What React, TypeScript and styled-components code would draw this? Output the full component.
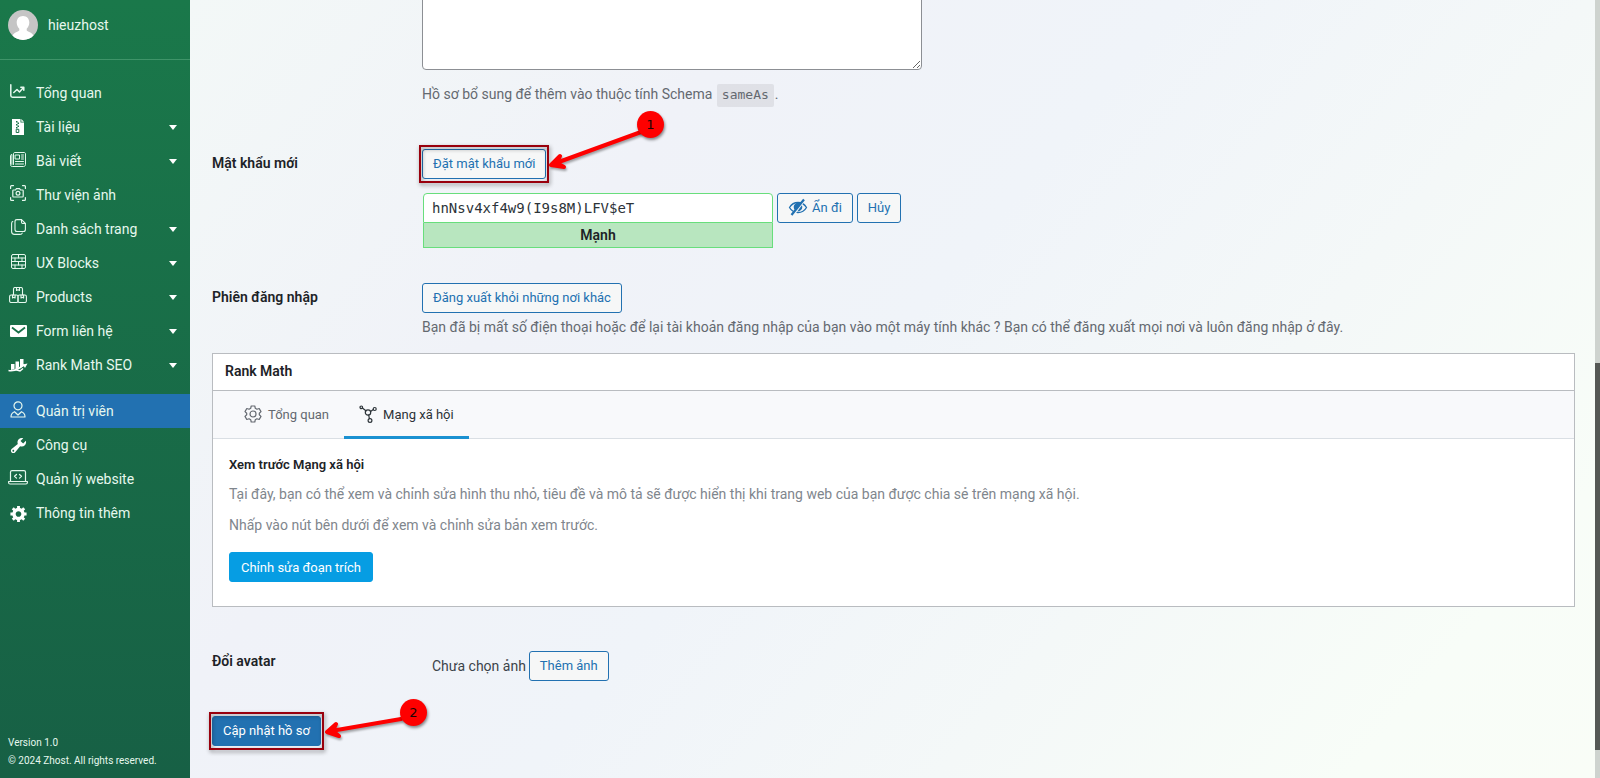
import React from 'react';
import styled, { createGlobalStyle, css } from 'styled-components';

const GlobalStyle = createGlobalStyle`
  *, *::before, *::after { box-sizing: border-box; }
  body {
    margin: 0;
    font: 14px/20px Roboto, "Liberation Sans", sans-serif;
    color: #3c434a;
    overflow-x: hidden;
  }
  button, input, textarea { font-family: inherit; margin: 0; }
  h2, h3, p, ul { margin: 0; padding: 0; }
  ul { list-style: none; }
`;

const Page = styled.div`
  display: flex;
  min-height: 100vh;
`;

/* ---------- sidebar ---------- */

const Sidebar = styled.nav`
  display: flex;
  flex-direction: column;
  flex: none;
  width: 190px;
  color: #e6f8ee;
  background: linear-gradient(180deg, #1a784a 0%, #176045 100%);
`;

const UserBar = styled.a`
  display: flex;
  align-items: center;
  gap: 10px;
  height: 60px;
  padding: 0 8px 10px;
  border-bottom: 1px solid #3f9469;
  color: inherit;
  text-decoration: none;
`;

const MenuList = styled.ul`
  padding-top: 16px;
`;

const MenuItem = styled.li<{ $separated?: boolean }>`
  margin-top: ${(p) => (p.$separated ? '12px' : '0')};
`;

const MenuLink = styled.a<{ $active?: boolean }>`
  display: flex;
  align-items: center;
  height: 34px;
  padding: 0 13px 0 8px;
  color: inherit;
  background: ${(p) => (p.$active ? '#2271b1' : 'transparent')};
  text-decoration: none;
`;

const MenuIcon = styled.span<{ $raised?: boolean }>`
  display: flex;
  justify-content: center;
  width: 20px;
  margin-right: 8px;
  padding-bottom: ${(p) => (p.$raised ? '4px' : '0')};
`;

const MenuText = styled.span`
  flex: 1;
`;

const Caret = styled.span`
  border: 4px solid transparent;
  border-top: 5px solid #fff;
  border-bottom: 0;
`;

const Version = styled.footer`
  margin-top: auto;
  padding: 0 8px 8px;
  font-size: 10px;
  line-height: 18px;
`;

/* ---------- content ---------- */

const Content = styled.main`
  flex: 1;
  min-width: 0;
  padding: 0 20px 28px 22px;
  background: linear-gradient(130deg, #f3f8f7 0%, #f0f2f8 28%, #f0f4f9 48%, #f4f8f8 68%, #f8fdf8 88%, #f9fdf7 100%);
`;

const Field = styled.section<{ $top?: number }>`
  display: grid;
  grid-template-columns: 210px 1fr;
  padding-top: ${(p) => p.$top ?? 0}px;
`;

const Label = styled.label<{ $flush?: boolean }>`
  padding-top: ${(p) => (p.$flush ? '0' : '4px')};
  font-weight: 600;
  color: #1d2327;
`;

const ProfileLinks = styled.textarea`
  display: block;
  width: 500px;
  max-width: 100%;
  height: 76px;
  margin-top: -6px;
  border: 1px solid #8c8f94;
  border-radius: 4px;
  background: #fff;
`;

const Description = styled.p<{ $top: number }>`
  margin-top: ${(p) => p.$top}px;
  color: #646970;
`;

const Code = styled.code`
  display: inline-block;
  padding: 1px 5px 2px;
  margin: 0 1px;
  border-radius: 2px;
  background: rgba(0, 0, 0, 0.07);
  font: 13px/20px "DejaVu Sans Mono", monospace;
`;

const Button = styled.button<{ $kind?: 'primary' | 'accent' }>`
  display: inline-flex;
  align-items: center;
  gap: 4px;
  height: 30px;
  padding: 0 10px 2px;
  border: 1px solid #2271b1;
  border-radius: 3px;
  color: #2271b1;
  background: #f6f7f7;
  font-size: 13px;
  white-space: nowrap;
  vertical-align: top;
  ${(p) => p.$kind === 'primary' && css`color: #fff; background: #2271b1;`}
  ${(p) => p.$kind === 'accent' && css`
    padding: 0 11px;
    border-color: #069de3;
    color: #fff;
    background: #069de3;
  `}
`;

const PasswordRow = styled.div`
  display: flex;
  align-items: flex-start;
  gap: 4px;
  margin-top: 14px;
`;

const PasswordBox = styled.div`
  width: 350px;
  margin-left: 1px;
`;

const PasswordInput = styled.input`
  display: block;
  width: 100%;
  height: 30px;
  padding: 0 8px;
  border: 1px solid #68de7c;
  border-radius: 4px 4px 0 0;
  background: #fff;
  color: #2c3338;
  && { font: 14px/28px "DejaVu Sans Mono", monospace; }
`;

const Strength = styled.output`
  display: block;
  height: 25px;
  border: 1px solid #68de7c;
  border-top: 0;
  background: #b8e6bf;
  color: #1d2327;
  font-weight: 600;
  line-height: 24px;
  text-align: center;
`;

/* ---------- panel ---------- */

const Panel = styled.section`
  margin-top: 16px;
  border: 1px solid #b9bcc0;
  background: #fff;
`;

const PanelTitle = styled.h2`
  height: 37px;
  padding-left: 12px;
  border-bottom: 1px solid #b9bcc0;
  color: #1d2327;
  font-size: 14px;
  font-weight: 600;
  line-height: 34px;
`;

const Tabs = styled.div`
  display: flex;
  height: 48px;
  padding-left: 16px;
  border-bottom: 1px solid #dadfe4;
  background: #f8f9fb;
`;

const Tab = styled.button<{ $active?: boolean }>`
  display: flex;
  align-items: center;
  gap: 6px;
  height: 48px;
  padding: 1px 15px 0;
  border: 0;
  border-bottom: 3px solid ${(p) => (p.$active ? '#1b91d1' : 'transparent')};
  background: none;
  color: ${(p) => (p.$active ? '#2c3338' : '#646970')};
  font-size: 13px;
`;

const PanelBody = styled.div`
  padding: 16px 16px 24px;
`;

const PanelHeading = styled.h3`
  color: #1d2327;
  font-size: 13px;
  font-weight: 600;
`;

const PanelText = styled.p`
  margin: 9px 0 11px;
  color: #7f868d;
`;

const PanelActions = styled.div`
  margin-top: 17px;
`;

const AvatarRow = styled.div`
  display: flex;
  align-items: center;
  gap: 3px;
  padding-left: 10px;
`;

const SubmitRow = styled.div`
  padding-top: 35px;
`;

/* ---------- call-outs drawn over the page ---------- */

const Marked = styled.span`
  position: relative;
  display: inline-block;
  vertical-align: top;
`;

const Frame = styled.span`
  position: absolute;
  inset: -4px -3px;
  border: 2px solid #99000d;
  filter: drop-shadow(1px 2px 2px rgba(0, 0, 0, 0.45));
  pointer-events: none;
`;

const ArrowSvg = styled.svg`
  position: absolute;
  left: 100%;
  top: 0;
  overflow: visible;
  filter: drop-shadow(1px 2px 1px rgba(0, 0, 0, 0.35));
  pointer-events: none;
`;

const Step = styled.span<{ $left: number; $top: number }>`
  position: absolute;
  left: ${(p) => p.$left}px;
  top: ${(p) => p.$top}px;
  width: 27px;
  height: 27px;
  border-radius: 50%;
  background: #fe0000;
  color: #1b0505;
  font: 13px/27px "DejaVu Sans", sans-serif;
  text-align: center;
  box-shadow: 1px 2px 3px rgba(0, 0, 0, 0.45);
`;

const ScrollTrack = styled.div`
  flex: none;
  width: 5px;
  padding-top: 46.7vh;
  background: #ced3cf;
`;

const ScrollThumb = styled.div`
  height: 49.7vh;
  background: #555855;
`;

/* ---------- drawings ---------- */

const Arrow = ({ shaft, head }: { shaft: string; head: string }) => (
  <ArrowSvg width="100" height="30" fill="none" stroke="#fe0000" strokeWidth="4" strokeLinecap="round" strokeLinejoin="round" aria-hidden="true">
    <path d={shaft} />
    <path d={head} fill="#fe0000" />
  </ArrowSvg>
);

const Avatar = () => (
  <svg width="30" height="30" viewBox="0 0 30 30" aria-hidden="true">
    <clipPath id="round"><circle cx="15" cy="15" r="15" /></clipPath>
    <g clipPath="url(#round)">
      <rect width="30" height="30" fill="#c5c5c5" />
      <path fill="#fff" d="M15 6c3.800 0 6.300 2.800 6.300 6.600 0 2.600-1.100 4.700-2.600 6.200v1.600c1.200 1.600 6.300 1.800 7.300 6.600v4H4v-4c1-4.800 6.100-5 7.300-6.600v-1.600c-1.500-1.500-2.600-3.600-2.600-6.200C8.700 8.800 11.200 6 15 6z" />
    </g>
  </svg>
);

const line = { fill: 'none', stroke: 'currentColor', strokeLinecap: 'round', strokeLinejoin: 'round' } as const;

const ChartIcon = () => (
  <svg width="16" height="14" viewBox="0 0 16 14" {...line} strokeWidth="1.500">
    <path d="M.8.8v10.700c0 1 .6 1.700 1.700 1.700h12.800" />
    <path d="M3.800 8.500L7 5.500l2.500 2.500 4-4.500M10.800 3.200h3v3" />
  </svg>
);

const ZipIcon = () => (
  <svg width="12" height="16" viewBox="0 0 12 16">
    <path d="M0 0h8.500v3.500H12V16H0z" fill="#fff" />
    <path d="M9.300 0L12 2.700H9.300z" fill="#fff" />
    <path d="M4 2h1.500v1.500H4zM5.500 3.500H7V5H5.500zM4 5h1.500v1.500H4zM5.500 6.500H7V8H5.500zM4 8h1.500v1.500H4z" fill="#197049" />
    <path d="M4.200 10.300h2.600v3.200H4.200z" fill="none" stroke="#197049" />
  </svg>
);

const NewsIcon = () => (
  <svg width="16" height="15" viewBox="0 0 16 15" {...line}>
    <path d="M3.500 12.500V2c0-1 .5-1.500 1.500-1.500h9c1 0 1.500.5 1.500 1.500v10.500c0 1.200-.8 2-2 2H2.300c-1.200 0-1.800-.8-1.800-2V3.700c0-.8.600-1.200 1.400-1.200v10" />
    <path d="M5.500 3h4v4h-4zM11.500 3h2M11.500 5h2M11.500 7h2M5.500 9.500h8M5.500 12h8" />
  </svg>
);

const PhotoIcon = () => (
  <svg width="16" height="16" viewBox="0 0 16 16" {...line} strokeWidth="1.200">
    <path d="M.6 3.500v-2c0-.6.300-.9.900-.9h2M12.500.6h2c.6 0 .9.300.9.900v2M15.400 12.500v2c0 .6-.3.9-.9.9h-2M3.500 15.400h-2c-.6 0-.9-.3-.9-.9v-2" />
    <path d="M3.500 5h2l.8-1.300h3.400l.8 1.300h2c.4 0 .7.300.7.700v5.600c0 .4-.3.700-.7.700h-9c-.4 0-.7-.3-.7-.7V5.700c0-.4.300-.7.700-.7z" />
    <circle cx="8" cy="8.300" r="1.900" />
  </svg>
);

const PagesIcon = () => (
  <svg width="15" height="16" viewBox="0 0 15 16" {...line} strokeWidth="1.100">
    <path d="M6 .6h4.500l3.900 3.900v6c0 1.300-.7 2-2 2H6c-1.300 0-2-.7-2-2v-8c0-1.200.7-1.900 2-1.900z" />
    <path d="M10.500.8v2.500c0 .8.400 1.200 1.200 1.200h2.500" />
    <path d="M1.800 2.500C1 2.700.6 3.300.6 4.500v8c0 1.900 1 2.900 2.900 2.900H9c1.300 0 2-.4 2.200-1.300" />
  </svg>
);

const BricksIcon = () => (
  <svg width="15" height="15" viewBox="0 0 15 15" {...line}>
    <rect x=".5" y=".5" width="14" height="14" rx="1.500" />
    <path d="M.5 4h14M.5 7.500h14M.5 11h14M7.500 .5V4M4 4v3.500M11 4v3.500M7.500 7.500V11M4 11v3.500M11 11v3.500" />
  </svg>
);

const BoxesIcon = () => (
  <svg width="18" height="16" viewBox="0 0 18 16" {...line} strokeWidth="1.100">
    <path d="M4.500 8V2c0-1 .5-1.500 1.500-1.500h6c1 0 1.500.5 1.500 1.500v6M7.500.5v3l1.500-.8 1.500.8v-3" />
    <rect x=".6" y="8" width="8.400" height="7.500" rx="1.500" />
    <rect x="9" y="8" width="8.400" height="7.500" rx="1.500" />
    <path d="M3.500 8v3l1.300-.8 1.300.8V8M12 8v3l1.300-.8 1.300.8V8" />
  </svg>
);

const MailIcon = () => (
  <svg width="18" height="14" viewBox="0 0 18 14">
    <rect x="1" y="1" width="17" height="12" rx="1" fill="#fff" />
    <path d="M3 3.500l6.500 5 6.500-5" fill="none" stroke="#197049" strokeWidth="1.800" />
  </svg>
);

const RankIcon = () => (
  <svg width="20" height="14" viewBox="0 0 20 14" fill="#fff">
    <path d="M3 6h3.500v5L3 12zM7.500 3.500H11v6l-3.500 2zM12 1h3.500v7L12 10.500z" />
    <path d="M.5 12.500c4 .8 7-.2 10-2l5.500-3.500" fill="none" stroke="#fff" strokeWidth="1.500" />
    <path d="M14.500 6.500l5-1-2.500 4.500z" />
    <path d="M7 11.500l5 1.500 3-2.500" fill="none" stroke="#fff" strokeWidth="1.500" />
  </svg>
);

const PersonIcon = () => (
  <svg width="16" height="17" viewBox="0 0 16 17" {...line} strokeWidth="1.200">
    <circle cx="8" cy="4.800" r="4" />
    <path d="M4.500 10.700C2.300 11.500 1 13.200 1 16h14c0-2.800-1.300-4.500-3.500-5.300L8 14z" />
  </svg>
);

const WrenchIcon = () => (
  <svg width="19" height="19" viewBox="0 0 20 20">
    <path fill="#fff" d="M16.680 9.770c-1.340 1.340-3.300 1.670-4.950.99l-5.410 6.520c-.99.99-2.590.99-3.580 0s-.99-2.590 0-3.570l6.520-5.420c-.68-1.650-.35-3.610.99-4.950 1.280-1.280 3.120-1.620 4.720-1.060l-2.890 2.890 2.820 2.820 2.860-2.870c.53 1.580.18 3.390-1.080 4.650zM3.810 16.210c.4.39 1.040.39 1.430 0 .4-.4.4-1.040 0-1.430-.39-.4-1.030-.4-1.430 0-.39.39-.39 1.030 0 1.430z" />
  </svg>
);

const LaptopIcon = () => (
  <svg width="20" height="15" viewBox="0 0 20 15" {...line} strokeWidth="1.200">
    <path d="M2.500 11.500V2c0-.8.500-1.400 1.500-1.400h12c1 0 1.500.6 1.500 1.400v9.500" />
    <path d="M.6 11.500h18.800v1c0 1-.7 1.500-1.500 1.500H2.100c-.8 0-1.500-.5-1.500-1.500z" />
    <path d="M8.500 4.500l-2 1.800 2 1.800M11.500 4.500l2 1.800-2 1.800" />
  </svg>
);

const CogIcon = () => (
  <svg width="19" height="19" viewBox="0 0 19 20">
    <path fill="#fff" d="M18 12h-2.180c-.17.7-.44 1.350-.81 1.930l1.540 1.540-2.100 2.100-1.540-1.540c-.58.36-1.230.63-1.910.79V19H8v-2.180c-.68-.16-1.330-.43-1.910-.79l-1.540 1.540-2.120-2.120 1.540-1.540c-.36-.58-.63-1.230-.79-1.910H1V9.030h2.170c.16-.7.44-1.350.8-1.940L2.430 5.550l2.100-2.100 1.540 1.540c.58-.37 1.240-.64 1.930-.81V2h3v2.180c.68.16 1.330.43 1.910.79l1.540-1.540 2.120 2.120-1.540 1.540c.36.59.64 1.240.8 1.940H18V12zm-8.500 1.500c1.660 0 3-1.340 3-3s-1.340-3-3-3-3 1.340-3 3 1.340 3 3 3z" />
  </svg>
);

const GearOutline = () => (
  <svg width="18" height="18" viewBox="0 0 18 18" {...line} strokeWidth="1.200">
    <path d="M7.200 1h3.600l.5 2.300 1.600.9 2.300-.7L17 6.600 15.300 8.200v1.600l1.700 1.600-1.800 3.100-2.300-.7-1.600.9-.5 2.300H7.200l-.5-2.300-1.600-.9-2.300.7L1 11.400l1.700-1.600V8.200L1 6.600l1.800-3.100 2.300.7 1.600-.9z" />
    <circle cx="9" cy="9" r="3" />
  </svg>
);

const SocialIcon = () => (
  <svg width="18" height="18" viewBox="0 0 18 18" {...line} strokeWidth="1.200">
    <circle cx="9" cy="7.500" r="2.700" />
    <circle cx="2.300" cy="2.300" r="1.300" />
    <circle cx="15.700" cy="4" r="1.500" />
    <circle cx="11" cy="15.500" r="1.900" />
    <path d="M3.400 3.100l3.500 2.700M11.600 6.400l2.700-1.800M9.700 10.200l.7 3.400" />
  </svg>
);

const HiddenIcon = () => (
  <svg width="20" height="18" viewBox="0 0 20 18">
    <path d="M1.500 9.500C3.500 6 6.500 4.500 10 4.500s6.500 1.500 8.500 5c-2 3.500-5 5-8.500 5s-6.500-1.500-8.500-5z" fill="none" stroke="currentColor" strokeWidth="1.300" />
    <circle cx="10" cy="9" r="4.300" fill="currentColor" />
    <path d="M5 17.500L17 1.500" stroke="#f6f7f7" strokeWidth="2" />
    <path d="M3.500 17L16 1.500" stroke="currentColor" strokeWidth="2.200" />
  </svg>
);

type Entry = { text: string; icon: React.ReactNode; raised?: boolean; caret?: boolean; active?: boolean };

const menu: Entry[] = [
  { text: 'Tổng quan', icon: <ChartIcon />, raised: true },
  { text: 'Tài liệu', icon: <ZipIcon />, caret: true },
  { text: 'Bài viết', icon: <NewsIcon />, raised: true, caret: true },
  { text: 'Thư viện ảnh', icon: <PhotoIcon />, raised: true },
  { text: 'Danh sách trang', icon: <PagesIcon />, raised: true, caret: true },
  { text: 'UX Blocks', icon: <BricksIcon />, raised: true, caret: true },
  { text: 'Products', icon: <BoxesIcon />, raised: true, caret: true },
  { text: 'Form liên hệ', icon: <MailIcon />, caret: true },
  { text: 'Rank Math SEO', icon: <RankIcon />, caret: true },
  { text: 'Quản trị viên', icon: <PersonIcon />, raised: true, active: true },
  { text: 'Công cụ', icon: <WrenchIcon /> },
  { text: 'Quản lý website', icon: <LaptopIcon />, raised: true },
  { text: 'Thông tin thêm', icon: <CogIcon /> },
];

export default function App() {
  return (
    <>
      <GlobalStyle />
      <Page>
        <Sidebar>
          <UserBar href="#profile">
            <Avatar />
            hieuzhost
          </UserBar>
          <MenuList>
            {menu.map((m) => (
              <MenuItem key={m.text} $separated={m.active}>
                <MenuLink href="#" $active={m.active}>
                  <MenuIcon $raised={m.raised}>{m.icon}</MenuIcon>
                  <MenuText>{m.text}</MenuText>
                  {m.caret && <Caret />}
                </MenuLink>
              </MenuItem>
            ))}
          </MenuList>
          <Version>
            Version 1.0
            <br />© 2024 Zhost. All rights reserved.
          </Version>
        </Sidebar>

        <Content>
          <Field>
            <span />
            <div>
              <ProfileLinks aria-label="Hồ sơ bổ sung" />
              <Description $top={14}>
                Hồ sơ bổ sung để thêm vào thuộc tính Schema <Code>sameAs</Code>.
              </Description>
            </div>
          </Field>

          <Field $top={42}>
            <Label htmlFor="password">Mật khẩu mới</Label>
            <div>
              <Marked>
                <Button type="button">Đặt mật khẩu mới</Button>
                <Frame />
                <Arrow shaft="M95 -17L10 14" head="M14 7L5 16L18 18L11 14z" />
                <Step $left={215} $top={-38}>1</Step>
              </Marked>
              <PasswordRow>
                <PasswordBox>
                  <PasswordInput id="password" type="text" defaultValue="hnNsv4xf4w9(I9s8M)LFV$eT" />
                  <Strength htmlFor="password">Mạnh</Strength>
                </PasswordBox>
                <Button type="button"><HiddenIcon />Ẩn đi</Button>
                <Button type="button">Hủy</Button>
              </PasswordRow>
            </div>
          </Field>

          <Field $top={35}>
            <Label as="span">Phiên đăng nhập</Label>
            <div>
              <Button type="button">Đăng xuất khỏi những nơi khác</Button>
              <Description $top={4}>
                Bạn đã bị mất số điện thoại hoặc để lại tài khoản đăng nhập của bạn vào một máy tính khác ? Bạn có thể đăng xuất mọi nơi và luôn đăng nhập ở đây.
              </Description>
            </div>
          </Field>

          <Panel>
            <PanelTitle>Rank Math</PanelTitle>
            <Tabs role="tablist">
              <Tab role="tab" type="button"><GearOutline />Tổng quan</Tab>
              <Tab role="tab" type="button" aria-selected $active><SocialIcon />Mạng xã hội</Tab>
            </Tabs>
            <PanelBody>
              <PanelHeading>Xem trước Mạng xã hội</PanelHeading>
              <PanelText>
                Tại đây, bạn có thể xem và chỉnh sửa hình thu nhỏ, tiêu đề và mô tả sẽ được hiển thị khi trang web của bạn được chia sẻ trên mạng xã hội.
              </PanelText>
              <PanelText>Nhấp vào nút bên dưới để xem và chỉnh sửa bản xem trước.</PanelText>
              <PanelActions>
                <Button type="button" $kind="accent">Chỉnh sửa đoạn trích</Button>
              </PanelActions>
            </PanelBody>
          </Panel>

          <Field $top={44}>
            <Label as="span" $flush>Đổi avatar</Label>
            <AvatarRow>
              Chưa chọn ảnh
              <Button type="button">Thêm ảnh</Button>
            </AvatarRow>
          </Field>

          <SubmitRow>
            <Marked>
              <Button type="submit" $kind="primary">Cập nhật hồ sơ</Button>
              <Frame />
              <Arrow shaft="M80 3L10 15" head="M15 8L6 16L18 20L12 15z" />
              <Step $left={188} $top={-17}>2</Step>
            </Marked>
          </SubmitRow>
        </Content>

        <ScrollTrack aria-hidden="true">
          <ScrollThumb />
        </ScrollTrack>
      </Page>
    </>
  );
}
